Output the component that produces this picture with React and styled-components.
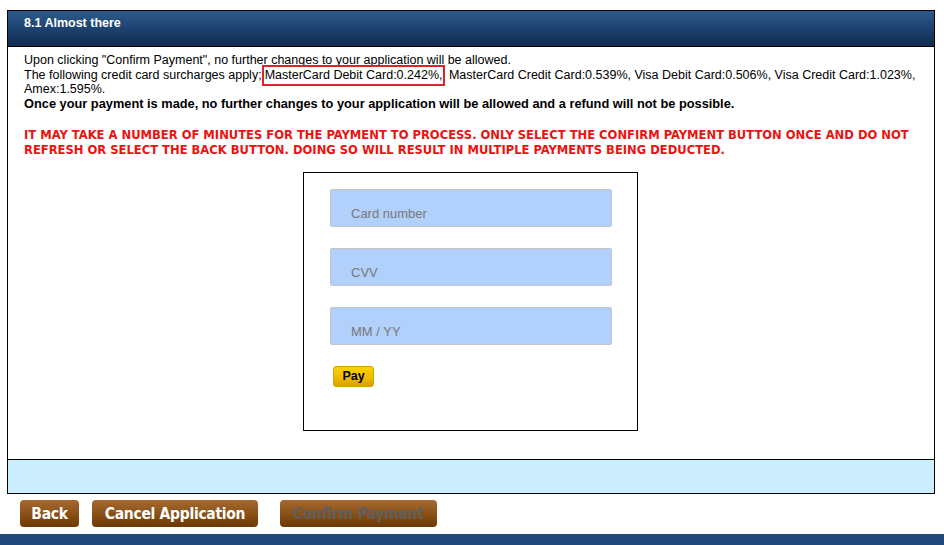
import React from "react";
import styled, { createGlobalStyle } from "styled-components";

const Global = createGlobalStyle`
  html, body { margin: 0; padding: 0; background: #fff; }
  body { font-family: "Liberation Sans", Arial, Helvetica, sans-serif; }
  * { box-sizing: border-box; }
`;

const Page = styled.div`
  width: 944px;
  height: 545px;
  display: flex;
  flex-direction: column;
  padding-top: 10px;
  overflow: hidden;
`;

const Panel = styled.section`
  margin: 0 9px 0 7px;
  border: 1px solid #000;
  display: flex;
  flex-direction: column;
`;

const Header = styled.h2`
  margin: 0;
  height: 36px;
  padding: 5px 0 0 16px;
  background: linear-gradient(to bottom, #2c5b8c 0%, #1d4270 50%, #112b4f 100%);
  border-bottom: 1px solid #000;
  color: #fff;
  font-size: 12.5px;
  font-weight: bold;
  line-height: 14px;
`;

const Body = styled.div`
  padding: 6px 16px 0 16px;
  height: 412px;
  display: flex;
  flex-direction: column;
  font-size: 12.5px;
  line-height: 14.7px;
  color: #111;
`;

const Para = styled.p`
  margin: 0;
  font-weight: ${(p) => (p.$bold ? "bold" : "normal")};
  font-size: ${(p) => (p.$bold ? "12.8px" : "12.5px")};
  color: #000;
`;

const Highlight = styled.span`
  border: 2px solid #e0202a;
  padding: 1px 1px 2px 1px;
`;

const Warning = styled.p`
  margin: 15px 0 0 0;
  color: #ee1111;
  font-family: "DejaVu Sans Condensed", "Liberation Sans", sans-serif;
  font-stretch: condensed;
  font-weight: bold;
  font-size: 12.85px;
  line-height: 15px;
`;

const CardBox = styled.div`
  align-self: center;
  margin-top: 15px;
  margin-left: -1px;
  width: 335px;
  height: 259px;
  border: 1px solid #000;
  padding: 16px 25px 0 26px;
  display: flex;
  flex-direction: column;
  gap: 21px;
`;

const Field = styled.input`
  height: 38px;
  width: 282px;
  background: #b1d0fc;
  border: 1px solid #c6c6c6;
  border-radius: 2px;
  padding: 11px 0 0 20px;
  font-family: "Liberation Sans", Arial, sans-serif;
  font-size: 13px;
  color: #333;
  outline: none;
  &::placeholder { color: #787878; }
`;

const PayButton = styled.button`
  align-self: flex-start;
  margin-left: 3px;
  width: 41px;
  height: 21px;
  padding: 0;
  border: 1px solid #d4a100;
  border-radius: 3px;
  background: linear-gradient(to bottom, #f9d100 0%, #efbd00 55%, #d7a000 100%);
  font-family: "Liberation Sans", Arial, sans-serif;
  font-weight: bold;
  font-size: 12.5px;
  color: #000;
`;

const InfoBar = styled.div`
  height: 34px;
  background: #cdeefe;
  border-top: 1px solid #000;
`;

const Actions = styled.div`
  display: flex;
  align-items: flex-start;
  padding: 6px 0 0 20px;
  height: 40px;
`;

const ActionButton = styled.button`
  height: 27px;
  margin-left: ${(p) => p.$offset || 0}px;
  width: ${(p) => p.$w}px;
  padding: 0;
  border: none;
  border-radius: 4px;
  background: linear-gradient(to bottom, #a56a31 0%, #8a5218 50%, #6a3800 100%);
  color: ${(p) => (p.disabled ? "#5e5e5e" : "#fff")};
  font-family: "DejaVu Sans Condensed", "Liberation Sans", sans-serif;
  font-stretch: condensed;
  font-weight: bold;
  font-size: 15.5px;
  letter-spacing: -0.3px;
  cursor: ${(p) => (p.disabled ? "default" : "pointer")};
`;

const Footer = styled.div`
  height: 11px;
  background: #204878;
`;

export default function App() {
  return (
    <>
      <Global />
      <Page>
        <Panel>
          <Header>8.1 Almost there</Header>
          <Body>
            <Para>Upon clicking "Confirm Payment", no further changes to your application will be allowed.</Para>
            <Para>
              The following credit card surcharges apply;<Highlight>MasterCard Debit Card:0.242%,</Highlight> MasterCard Credit Card:0.539%, Visa Debit Card:0.506%, Visa Credit Card:1.023%, Amex:1.595%.
            </Para>
            <Para $bold>Once your payment is made, no further changes to your application will be allowed and a refund will not be possible.</Para>
            <Warning>
              IT MAY TAKE A NUMBER OF MINUTES FOR THE PAYMENT TO PROCESS. ONLY SELECT THE CONFIRM PAYMENT BUTTON ONCE AND DO NOT REFRESH OR SELECT THE BACK BUTTON. DOING SO WILL RESULT IN MULTIPLE PAYMENTS BEING DEDUCTED.
            </Warning>
            <CardBox>
              <Field placeholder="Card number" />
              <Field placeholder="CVV" />
              <Field placeholder="MM / YY" />
              <PayButton>Pay</PayButton>
            </CardBox>
          </Body>
          <InfoBar />
        </Panel>
        <Actions>
          <ActionButton $w={59}>Back</ActionButton>
          <ActionButton $w={166} $offset={13}>Cancel Application</ActionButton>
          <ActionButton $w={157} $offset={22} disabled>Confirm Payment</ActionButton>
        </Actions>
        <Footer />
      </Page>
    </>
  );
}
